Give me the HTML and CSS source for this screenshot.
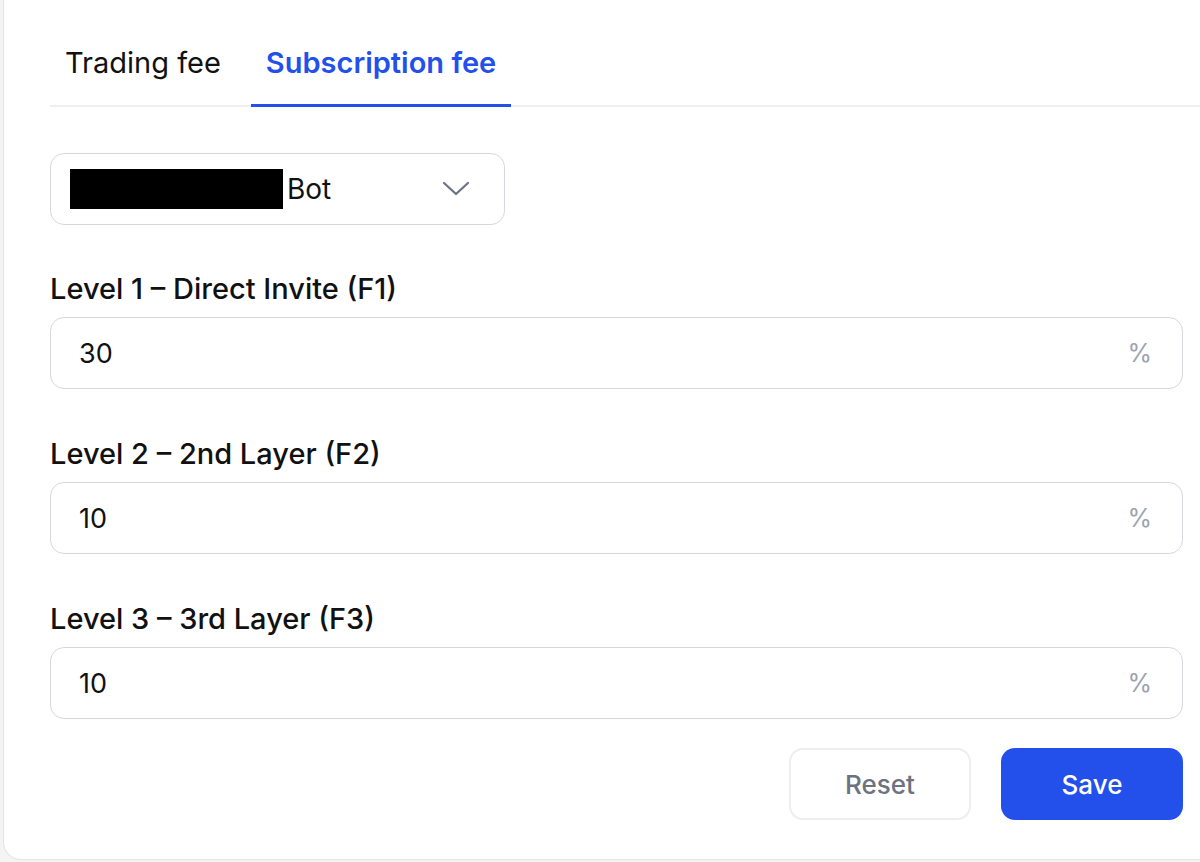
FILE: index.html
```html
<!DOCTYPE html>
<html lang="en">
  <head>
    <meta charset="UTF-8" />
    <meta name="viewport" content="width=device-width, initial-scale=1" />
    <title>Commission Settings</title>
    <link rel="stylesheet" href="styles.css">
  </head>
  <body>
    <div class="card">
      <div class="tabs">
        <div class="tab">Trading fee</div>
        <div class="tab active">Subscription fee</div>
      </div>

      <form class="fee-form" onsubmit="return false">
        <div class="bot-select">
          <span class="redacted"></span>
          <span class="bot-name">Bot</span>
          <svg class="chevron" width="28" height="16" viewBox="0 0 28 16">
            <path d="M2 2 L14 13 L26 2" fill="none" stroke="#6b7280" stroke-width="2.2" stroke-linecap="round" stroke-linejoin="round" />
          </svg>
        </div>

        <div class="field">
          <label>Level 1 – Direct Invite (F1)</label>
          <div class="input-box">
            <span class="value">30</span>
            <span class="unit">%</span>
          </div>
        </div>

        <div class="field">
          <label>Level 2 – 2nd Layer (F2)</label>
          <div class="input-box">
            <span class="value">10</span>
            <span class="unit">%</span>
          </div>
        </div>

        <div class="field last">
          <label>Level 3 – 3rd Layer (F3)</label>
          <div class="input-box">
            <span class="value">10</span>
            <span class="unit">%</span>
          </div>
        </div>

        <div class="actions">
          <button type="button" class="btn-reset">Reset</button>
          <button type="submit" class="btn-save">Save</button>
        </div>
      </form>
    </div>
  </body>
</html>
```

FILE: styles.css
```css
html, body {
  margin: 0;
  height: 100%;
  overflow: hidden;
}
body {
  font-family: Inter, "Noto Sans", Arial, sans-serif;
  background: #f4f4f5;
  color: #111;
  padding-left: 3px;
  box-sizing: border-box;
}
.card {
  height: 860px;
  box-sizing: border-box;
  background: #fff;
  border: 1px solid #e3e4e7;
  border-top: none;
  border-right: none;
  border-bottom-left-radius: 18px;
  padding: 1px 0 0 46px;
}
.tabs {
  display: flex;
  gap: 15px;
  border-bottom: 2px solid #eeeff1;
}
.tab {
  font-size: 29px;
  line-height: 36px;
  padding: 44px 15px 23px;
  margin-bottom: -2px;
  border-bottom: 3px solid transparent;
  color: #111;
}
.tab.active {
  color: #2350eb;
  font-weight: 600;
  border-bottom-color: #2350eb;
}
.fee-form {
  width: 1133px;
  padding-top: 46px;
}
.bot-select {
  width: 455px;
  height: 72px;
  box-sizing: border-box;
  border: 1px solid #d6d8dd;
  border-radius: 14px;
  display: flex;
  align-items: center;
  padding: 0 34px 0 19px;
  margin-bottom: 46px;
}
.redacted {
  width: 213px;
  height: 40px;
  background: #000;
}
.bot-name {
  font-size: 28px;
  margin-left: 4px;
  flex: 1;
}
.field {
  margin-bottom: 47px;
}
.field.last {
  margin-bottom: 29px;
}
.field label {
  display: block;
  font-size: 29px;
  font-weight: 500;
  line-height: 36px;
  margin-bottom: 10px;
}
.input-box {
  height: 72px;
  box-sizing: border-box;
  border: 1px solid #d6d8dd;
  border-radius: 14px;
  display: flex;
  align-items: center;
  justify-content: space-between;
  padding: 0 30px 0 28px;
}
.value {
  font-size: 27px;
}
.unit {
  font-size: 25px;
  color: #9ca3af;
}
.actions {
  display: flex;
  justify-content: flex-end;
  gap: 30px;
}
.actions button {
  width: 182px;
  height: 72px;
  border-radius: 14px;
  font-family: inherit;
  font-size: 26px;
  font-weight: 500;
  cursor: pointer;
}
.btn-reset {
  background: #fff;
  border: 2px solid #eceef1;
  color: #6b7280;
}
.btn-save {
  background: #2350eb;
  border: none;
  color: #fff;
}
```
